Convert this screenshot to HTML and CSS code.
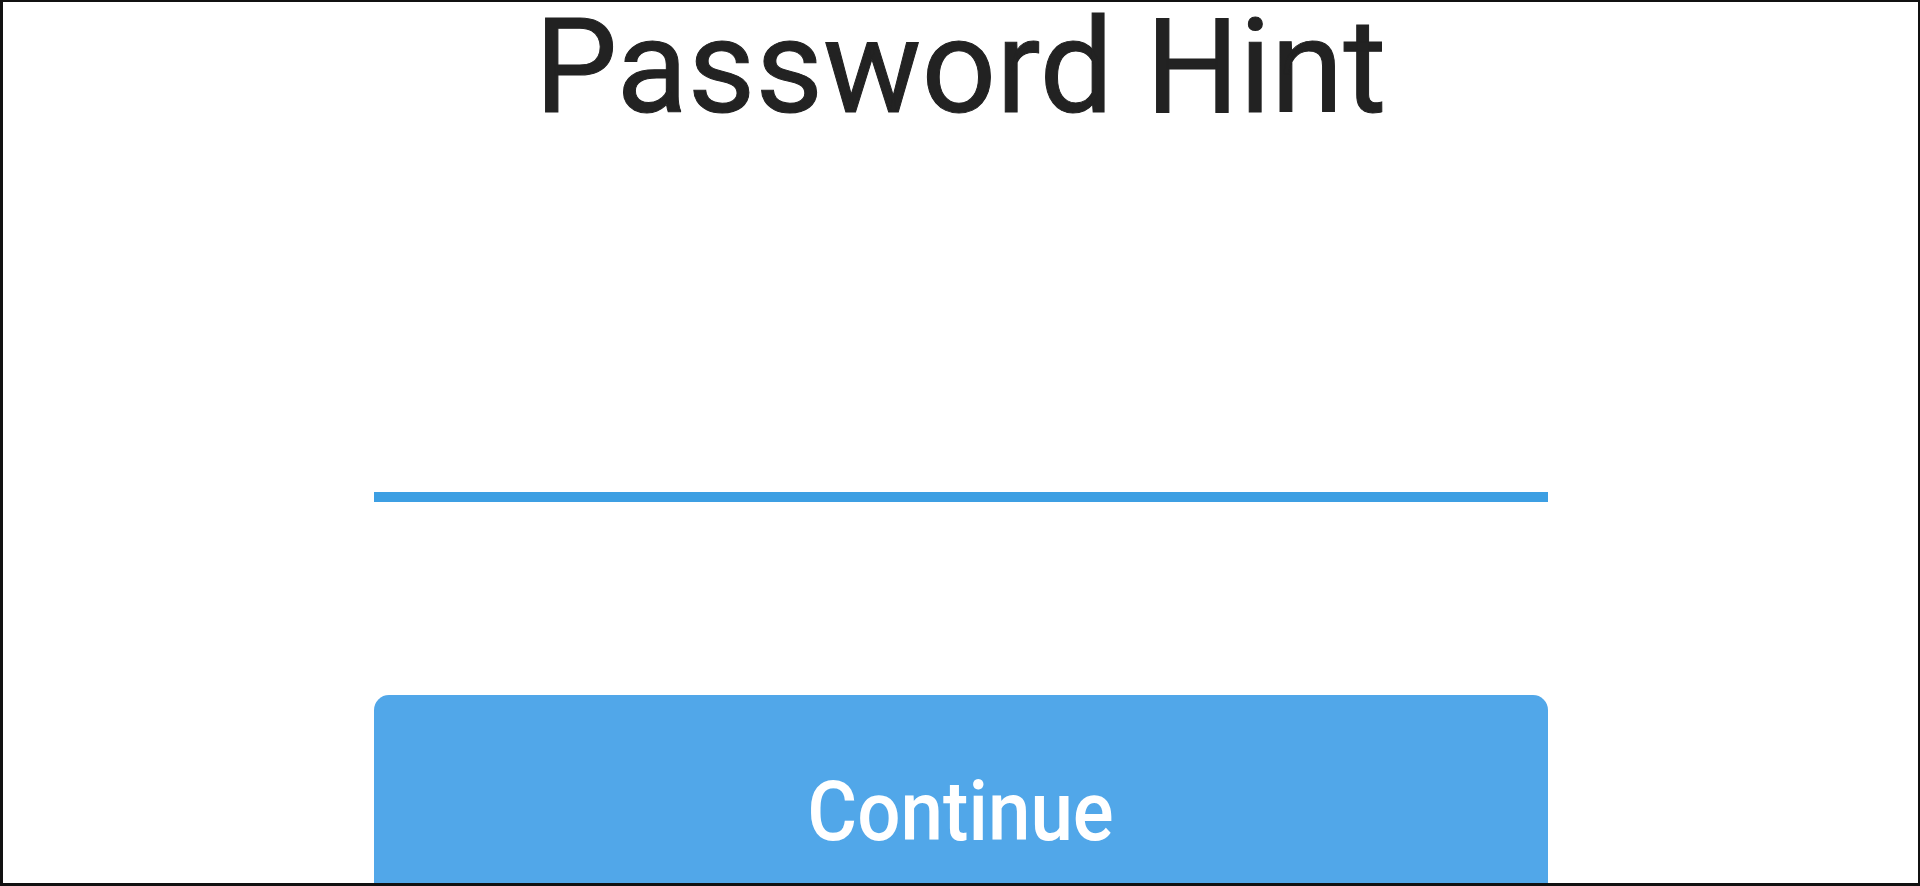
FILE: index.html
```html
<!DOCTYPE html>
<html lang="en">
<head>
<meta charset="utf-8">
<title>Password Hint</title>
<link rel="stylesheet" href="styles.css">
</head>
<body>
<div class="frame">
  <h1 class="title">Password Hint</h1>
  <div class="field"><input class="input" type="text" aria-label="Password Hint"></div>
  <button class="btn" type="button"><span class="btn-label">Continue</span></button>
</div>
</body>
</html>
```

FILE: styles.css
```css
html, body {
  margin: 0;
  padding: 0;
  background: #ffffff;
}
.frame {
  box-sizing: border-box;
  width: 1920px;
  height: 886px;
  border-style: solid;
  border-color: #111111;
  border-width: 2px 2px 3px 3px;
  overflow: hidden;
  display: flex;
  flex-direction: column;
  align-items: center;
  background: #ffffff;
}
.title {
  margin: 0;
  font-family: Roboto, "Liberation Sans", sans-serif;
  font-weight: 400;
  font-size: 131px;
  line-height: 1;
  color: #222222;
  white-space: nowrap;
  -webkit-text-stroke: 1px #222222;
}
.field {
  width: 1174px;
  margin-top: 359px;
  border-bottom: 10px solid #3d9fe3;
}
.input {
  display: block;
  width: 100%;
  height: 0;
  padding: 0;
  border: 0;
  outline: none;
  background: transparent;
}
.btn {
  display: flex;
  flex: none;
  align-items: flex-start;
  justify-content: center;
  width: 1174px;
  height: 260px;
  margin-top: 193px;
  padding: 75px 0 0 0;
  border: 0;
  border-radius: 15px;
  background: #51a7e9;
  box-sizing: border-box;
}
.btn-label {
  display: block;
  font-family: Roboto, "Liberation Sans", sans-serif;
  font-weight: 500;
  font-size: 83px;
  line-height: 1;
  color: #ffffff;
  transform: scaleX(0.92);
}
```
